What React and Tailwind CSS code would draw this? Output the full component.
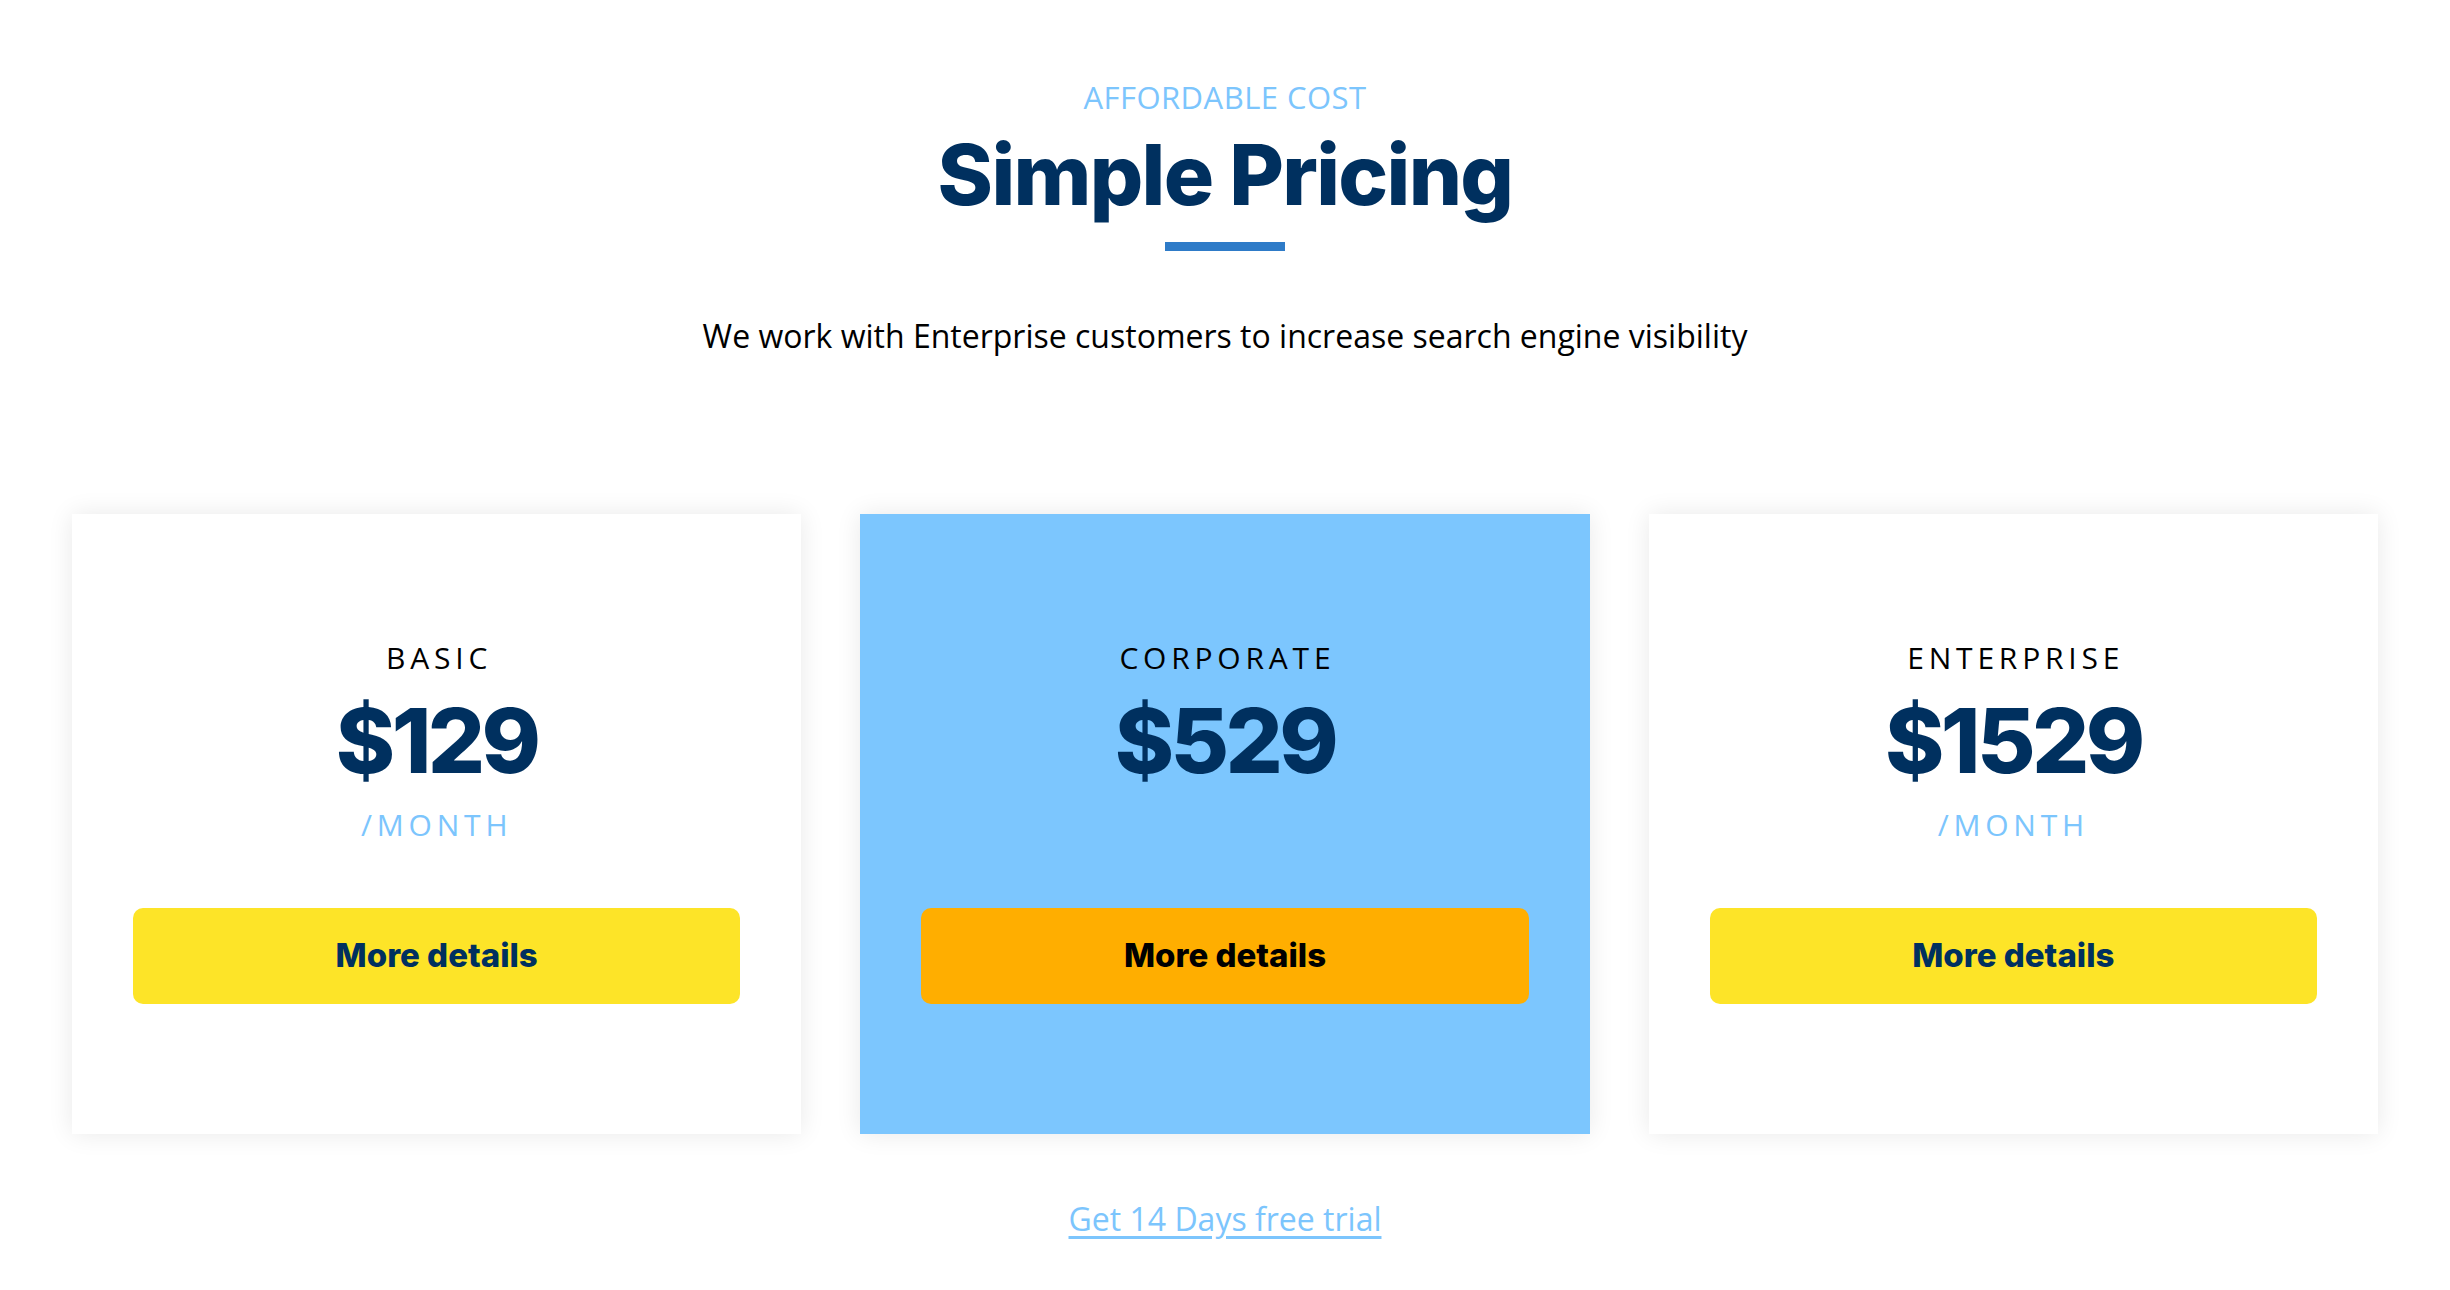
export default function App() {
  const plans = [
    { name: "BASIC", price: "$129", month: true, featured: false },
    { name: "CORPORATE", price: "$529", month: false, featured: true },
    { name: "ENTERPRISE", price: "$1529", month: true, featured: false },
  ];
  const heading = { fontFamily: "Inter, 'Noto Sans', sans-serif" };
  const body = { fontFamily: "'Open Sans', 'Noto Sans', sans-serif" };
  return (
    <div className="w-[2450px] h-[1290px] bg-white flex flex-col items-center" style={body}>
      <div className="mt-[79px] text-[31px] leading-[36px] text-[#7cc5fd] tracking-[0.015em]">AFFORDABLE COST</div>
      <h1 className="mt-[15px] text-[84px] leading-[90px] font-extrabold text-[#00305f] tracking-[-0.02em]" style={heading}>
        Simple Pricing
      </h1>
      <div className="mt-[22px] w-[120px] h-[9px] bg-[#2e7bc8]" />
      <p className="mt-[67px] text-[32px] leading-[36px] text-black">
        We work with Enterprise customers to increase search engine visibility
      </p>
      <div className="mt-[160px] w-full px-[72px] grid grid-cols-3 gap-[59px]">
        {plans.map((p) => (
          <div
            key={p.name}
            className={`h-[620px] flex flex-col items-center pt-[126px] px-[61px] shadow-[0_0_24px_rgba(0,0,0,0.09)] ${p.featured ? "bg-[#7cc6fe]" : "bg-white"}`}
          >
            <div className="text-[30px] leading-[36px] tracking-[0.16em] text-black pl-[0.16em]">{p.name}</div>
            <div className="mt-[20px] text-[90px] leading-[90px] font-extrabold text-[#00305f] tracking-[-0.04em]" style={heading}>
              {p.price}
            </div>
            <div className={`mt-[21px] text-[30px] leading-[36px] tracking-[0.16em] text-[#7cc5fd] ${p.month ? "" : "invisible"}`}>
              /MONTH
            </div>
            <button
              className={`mt-[65px] w-full h-[96px] rounded-[10px] text-[33px] font-extrabold ${p.featured ? "bg-[#ffae00] text-black" : "bg-[#fde428] text-[#00305f]"}`}
              style={heading}
            >
              More details
            </button>
          </div>
        ))}
      </div>
      <a href="#" className="mt-[67px] text-[32px] leading-[36px] text-[#7cc5fd] underline underline-offset-[5px]">
        Get 14 Days free trial
      </a>
    </div>
  );
}
